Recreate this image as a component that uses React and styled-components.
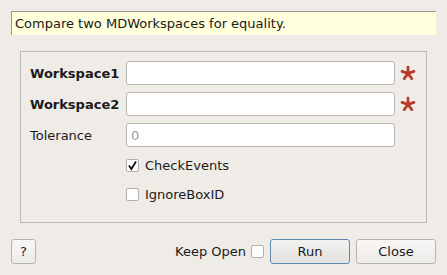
import React from 'react';
import styled, { createGlobalStyle } from 'styled-components';

const GlobalStyle = createGlobalStyle`
  html, body {
    margin: 0;
    padding: 0;
    background: #efebe7;
  }
  body {
    font-family: "DejaVu Sans", sans-serif;
    font-size: 13px;
    color: #1a1a1a;
  }
`;

const Dialog = styled.div`
  width: 447px;
  height: 275px;
  box-sizing: border-box;
  padding: 11px;
  display: flex;
  flex-direction: column;
`;

const Hint = styled.div`
  height: 24px;
  box-sizing: border-box;
  background: #ffffdc;
  border-left: 1px solid #9a9690;
  border-top: 1px solid #9a9690;
  padding-left: 3px;
  display: flex;
  align-items: center;
`;

const Group = styled.div`
  margin: 16px 9px 0;
  height: 172px;
  box-sizing: border-box;
  border: 1px solid #bcb8b3;
  padding: 9px 0 0 9px;
  display: grid;
  grid-template-columns: 96px 269px 22px;
  align-content: start;
  row-gap: 7px;
  align-items: center;
`;

const Label = styled.div`
  font-weight: ${p => (p.$required ? 'bold' : 'normal')};
`;

const Field = styled.input`
  height: 24px;
  box-sizing: border-box;
  border: 1px solid #b9b5b0;
  border-radius: 3px;
  background: #fff;
  font: inherit;
  padding: 0 4px;
  color: #1a1a1a;
  &::placeholder {
    color: #9c9c9c;
  }
`;

const Star = styled.svg`
  width: 16px;
  height: 16px;
  margin-left: 5px;
`;

const CheckRow = styled.label`
  grid-column: 2 / 4;
  height: 22px;
  display: flex;
  align-items: center;
  gap: 6px;
`;

const Box = styled.span`
  width: 13px;
  height: 13px;
  box-sizing: border-box;
  border: 1px solid #b3afaa;
  border-radius: 2px;
  background: #fff;
  display: flex;
  align-items: center;
  justify-content: center;
`;

const Footer = styled.div`
  margin-top: auto;
  display: flex;
  align-items: center;
`;

const Button = styled.button`
  height: 25px;
  width: ${p => p.$w}px;
  box-sizing: border-box;
  font: inherit;
  color: #1a1a1a;
  border-radius: 3px;
  border: 1px solid ${p => (p.$primary ? '#5f8bb3' : '#b6b2ad')};
  background: ${p =>
    p.$primary
      ? 'linear-gradient(#f3f2f1, #e3e1df)'
      : 'linear-gradient(#f8f7f6, #eeecea)'};
  padding: 0;
  margin-left: ${p => p.$gap || 0}px;
`;

const Spacer = styled.div`
  flex: 1;
`;

const KeepOpen = styled.span`
  margin-right: 5px;
`;

const Asterisk = () => (
  <Star viewBox="0 0 16 16">
    <g stroke="#b53a2c" strokeWidth="2.7" strokeLinecap="round">
      <line x1="8" y1="8.4" x2="8" y2="2" />
      <line x1="8" y1="8.4" x2="14" y2="6.4" />
      <line x1="8" y1="8.4" x2="2" y2="6.4" />
      <line x1="8" y1="8.4" x2="11.8" y2="13.6" />
      <line x1="8" y1="8.4" x2="4.2" y2="13.6" />
    </g>
  </Star>
);

const Tick = () => (
  <svg width="11" height="11" viewBox="0 0 11 11">
    <path d="M2 5.5 L4.3 9 L9 1.5" fill="none" stroke="#111" strokeWidth="1.8" />
  </svg>
);

const Check = ({ checked, children }) => (
  <CheckRow>
    <Box>{checked && <Tick />}</Box>
    {children}
  </CheckRow>
);

export default function App() {
  return (
    <>
      <GlobalStyle />
      <Dialog>
        <Hint>Compare two MDWorkspaces for equality.</Hint>
        <Group>
          <Label $required>Workspace1</Label>
          <Field />
          <Asterisk />
          <Label $required>Workspace2</Label>
          <Field />
          <Asterisk />
          <Label>Tolerance</Label>
          <Field placeholder="0" />
          <span />
          <span />
          <Check checked>CheckEvents</Check>
          <span />
          <Check>IgnoreBoxID</Check>
        </Group>
        <Footer>
          <Button $w={25}>?</Button>
          <Spacer />
          <KeepOpen>Keep Open</KeepOpen>
          <Box />
          <Button $w={80} $gap={6} $primary>Run</Button>
          <Button $w={80} $gap={6}>Close</Button>
        </Footer>
      </Dialog>
    </>
  );
}
